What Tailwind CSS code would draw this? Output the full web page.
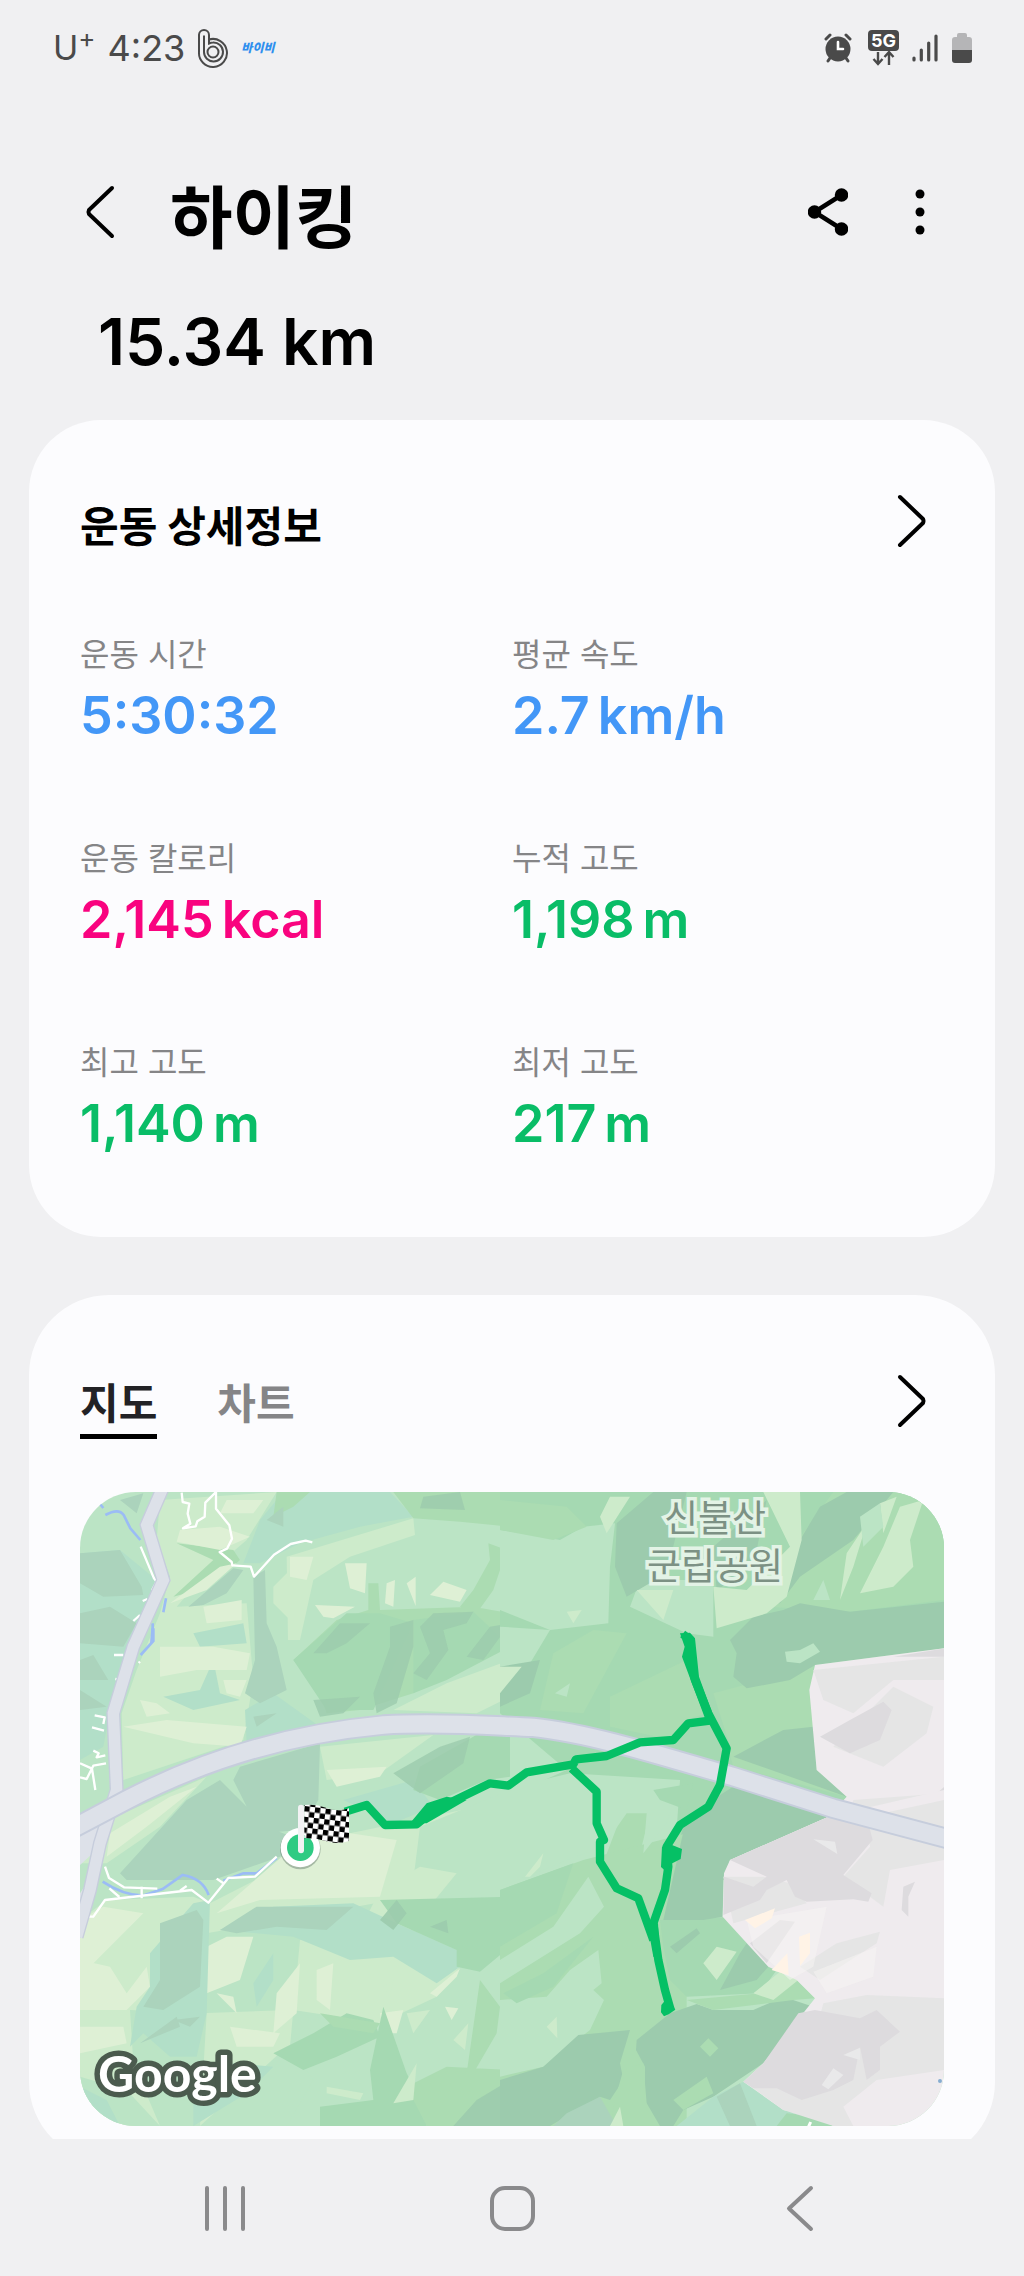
<!DOCTYPE html>
<html lang="ko">
<head>
<meta charset="utf-8">
<meta name="viewport" content="width=device-width, initial-scale=1">
<title>하이킹</title>
<script src="https://cdn.jsdelivr.net/npm/@tailwindcss/browser@4"></script>
</head>
<body class="flex h-screen flex-col overflow-hidden bg-[#f0f0f2] font-['Inter','Noto_Sans_CJK_KR',sans-serif] text-black">

<div class="flex h-[96px] shrink-0 items-center justify-between pr-[52px] pl-[53px] text-[#4a4a4a]">
  <div class="flex items-center">
    <span class="text-[34px] leading-none">U<sup class="text-[26px]">+</sup></span>
    <span class="ml-3 text-[36px] leading-none">4:23</span>
    <svg class="ml-3 h-10 w-8" viewBox="0 0 32 40" fill="none" stroke="currentColor" stroke-width="2" aria-hidden="true">
      <path d="M2 24V7a5 5 0 0 1 10 0v4.500A14 14 0 1 1 2 24Z"/>
      <path d="M7 24V7.500M7 24a9.500 9.500 0 1 0 9-9.500c-2 0-4 1-4 1V7"/>
      <circle cx="16" cy="24" r="5.500"/>
    </svg>
    <span class="ml-3 text-[12px] leading-none font-black text-[#2f8fee] italic">바이비</span>
  </div>
  <div class="flex items-center">
    <svg class="h-9 w-7" viewBox="0 0 28 36" aria-hidden="true">
      <g stroke="#4a4a4a" stroke-width="3" stroke-linecap="round"><path d="M2 9l4-4M26 9l-4-4M6 28l-2 3M22 28l2 3"/></g>
      <circle cx="14" cy="19" r="12.500" fill="#4a4a4a"/>
      <path d="M14 12v7h5" fill="none" stroke="#fff" stroke-width="2.600" stroke-linecap="round"/>
    </svg>
    <svg class="ml-4 h-9 w-8" viewBox="0 0 32 36" aria-hidden="true">
      <rect x="0" y="0" width="31" height="21" rx="4" fill="#4a4a4a"/>
      <text x="15.500" y="17" text-anchor="middle" font-size="18" font-weight="700" fill="#fff">5G</text>
      <path d="M10 22v11M5.500 29l4.500 5 4.500-5M21 35V23M16.500 27l4.500-5 4.500 5" fill="none" stroke="#4a4a4a" stroke-width="2.400"/>
    </svg>
    <svg class="ml-3 h-7 w-7" viewBox="0 0 28 28" stroke="#4a4a4a" stroke-width="3.200" stroke-linecap="round" aria-hidden="true">
      <path d="M2 24v2M9.300 16v10M16.700 9v17M24 2v24"/>
    </svg>
    <svg class="ml-3 h-[30px] w-5" viewBox="0 0 20 30" aria-hidden="true">
      <path d="M0 17V7q0-3 3-3h2V2q0-2 2-2h6q2 0 2 2v2h2q3 0 3 3v10Z" fill="#b5b5b7"/>
      <path d="M0 17h20v10q0 3-3 3H3q-3 0-3-3Z" fill="#4a4a4a"/>
    </svg>
  </div>
</div>

<header class="mt-[66px] flex h-[100px] shrink-0 items-center pr-[88px] pl-[84px]">
  <button class="flex h-16 w-8 items-center" aria-label="뒤로">
    <svg class="h-14 w-8" viewBox="0 0 32 56" fill="none" stroke="#000" stroke-width="4" stroke-linecap="round" stroke-linejoin="round"><path d="M28 4L5 26q-1 2 0 4L28 52"/></svg>
  </button>
  <h1 class="ml-[54px] flex-1 pt-3 text-[68px] leading-[88px] font-bold">하이킹</h1>
  <button aria-label="공유">
    <svg class="h-12 w-10" viewBox="0 0 40 48" stroke="#000" stroke-width="4.500"><path d="M33.500 7L6.500 24l27 17" fill="none"/><circle cx="33.500" cy="7" r="4.500"/><circle cx="6.500" cy="24" r="4.500"/><circle cx="33.500" cy="41" r="4.500"/></svg>
  </button>
  <button class="ml-14" aria-label="더보기">
    <svg class="h-12 w-8" viewBox="0 0 32 48"><circle cx="16" cy="6" r="4.500"/><circle cx="16" cy="24" r="4.500"/><circle cx="16" cy="42" r="4.500"/></svg>
  </button>
</header>

<p class="mt-10 mb-[38px] shrink-0 px-[98px] text-[64px] leading-[80px] font-semibold">15.34 km</p>

<main class="min-h-0 flex-1 overflow-y-auto px-[29px] [scrollbar-width:none]">
  <section class="rounded-[72px] bg-[#fcfcfe] px-[51px] pt-[73px] pb-[77px]">
    <div class="flex items-start justify-between pr-4">
      <h2 class="pt-1 text-[42px] leading-[60px] font-bold">운동 상세정보</h2>
      <button aria-label="운동 상세정보 보기">
        <svg class="h-14 w-8" viewBox="0 0 32 56" fill="none" stroke="#000" stroke-width="4" stroke-linecap="round" stroke-linejoin="round"><path d="M4 4l23 22q1 2 0 4L4 52"/></svg>
      </button>
    </div>
    <dl class="mt-[74px] grid grid-cols-2 gap-y-[83px]">
      <div><dt class="text-[32px] leading-[48px] text-[#858587]">운동 시간</dt><dd class="pt-px text-[52px] leading-[72px] font-semibold text-[#4397f7]">5:30:32</dd></div>
      <div><dt class="text-[32px] leading-[48px] text-[#858587]">평균 속도</dt><dd class="flex gap-2 pt-px text-[52px] leading-[72px] font-semibold text-[#4397f7]"><span>2.7</span><span>km/h</span></dd></div>
      <div><dt class="text-[32px] leading-[48px] text-[#858587]">운동 칼로리</dt><dd class="flex gap-2 pt-px text-[52px] leading-[72px] font-semibold text-[#f9037f]"><span>2,145</span><span>kcal</span></dd></div>
      <div><dt class="text-[32px] leading-[48px] text-[#858587]">누적 고도</dt><dd class="flex gap-2 pt-px text-[52px] leading-[72px] font-semibold text-[#09bd67]"><span>1,198</span><span>m</span></dd></div>
      <div><dt class="text-[32px] leading-[48px] text-[#858587]">최고 고도</dt><dd class="flex gap-2 pt-px text-[52px] leading-[72px] font-semibold text-[#09bd67]"><span>1,140</span><span>m</span></dd></div>
      <div><dt class="text-[32px] leading-[48px] text-[#858587]">최저 고도</dt><dd class="flex gap-2 pt-px text-[52px] leading-[72px] font-semibold text-[#09bd67]"><span>217</span><span>m</span></dd></div>
    </dl>
  </section>

  <section class="mt-[58px] rounded-[80px] bg-[#fcfcfe] px-[51px] pt-[78px] pb-9">
    <div class="flex items-start justify-between pr-4">
      <div class="flex gap-[60px]" role="tablist">
        <button role="tab" aria-selected="true" class="border-b-[5px] border-black text-[42px] leading-[61px] font-bold text-[#222225]">지도</button>
        <button role="tab" aria-selected="false" class="border-b-[5px] border-transparent text-[42px] leading-[61px] font-bold text-[#858587]">차트</button>
      </div>
      <button aria-label="지도 보기">
        <svg class="h-14 w-8" viewBox="0 0 32 56" fill="none" stroke="#000" stroke-width="4" stroke-linecap="round" stroke-linejoin="round"><path d="M4 4l23 22q1 2 0 4L4 52"/></svg>
      </button>
    </div>

    <svg class="mt-[53px] block w-full rounded-[56px]" viewBox="0 0 864 634" role="img" aria-label="하이킹 경로 지도">
      <defs>
        <pattern id="check" width="32" height="32" patternUnits="userSpaceOnUse" patternTransform="translate(734 978) rotate(7)">
          <rect width="32" height="32" fill="#fff"/><path d="M0 0h16v16H0zM16 16h16v16H16z"/>
        </pattern>
      </defs>
      <rect width="864" height="634" fill="#bbe4c5"/>

      <!-- terrain, north-west -->
      <g transform="translate(-20 -12) scale(.33333)">
        <path fill="#cdebcb" d="M300 60L650 36 560 180 420 300 350 380 560 370 580 600 550 780 190 900 185 700 230 570 300 400 330 290 290 180ZM680 230L1060 115 1065 165 870 230 760 300 720 480 684 480ZM60 1075L190 1000 440 890 300 1040 140 1150 60 1150ZM640 320L690 270 690 420 640 370ZM1350 540L1160 610 1000 690 1250 700 1350 650ZM780 800L1120 765 960 880 800 900ZM870 1060L1350 960V1200H780Z"/>
        <path fill="#b2dfc8" d="M650 60L720 36H990L1060 110 900 140 720 190 600 250 550 250 600 120ZM60 220L180 210 290 300 230 430 160 640 130 800 60 840ZM400 460L550 430 560 490 420 500ZM310 650L420 630 460 540 480 640 540 660 400 690ZM640 640L780 740 560 790 555 690ZM850 960L1060 900 1120 980 1000 1030Z"/>
        <path fill="#abdcb2" d="M1000 36H1350V140L1200 125 1060 115ZM650 36H750L700 80 640 110ZM1285 190L1340 210 1300 330 1250 400 1200 380 1240 330 1290 240ZM925 310L955 310 960 390 1240 380 1350 400V460L1200 560 1060 640 900 690 800 700 780 640 700 540 830 420 925 390ZM350 190L520 210 540 240 450 320 340 350 460 240Z"/>
        <path fill="#a5d9b2" d="M700 540L860 400 960 400 1060 430 1000 560 940 690 800 690ZM1060 420L1240 395 1350 500 1160 600 1060 640ZM1080 860L1240 770 1350 700V890L1280 900 1140 960 1060 930Z"/>
        <path fill="#def0d5" d="M500 60L610 60 580 100 480 100ZM360 150L480 140 570 170 480 210 350 185ZM330 370L480 260 530 250 440 330ZM430 380L545 360 545 420 440 430ZM300 500L460 500 570 520 560 570 410 570 300 590ZM190 740L320 720 560 740 540 800 400 790ZM330 950L410 920 260 1040 140 1130 150 1060ZM855 250L920 250 915 340 870 325ZM690 230L760 230 740 300 690 290ZM1110 345L1150 305 1220 330 1200 365ZM980 310L1005 300 1000 380 975 370ZM1040 310L1067 290V378ZM765 375L885 380 820 415 790 410ZM490 600L560 600 540 650 500 640ZM240 660L290 670 330 700 260 710ZM800 870L980 860 960 890 830 920Z"/>
        <path fill="#abd3bc" d="M60 220L180 210 245 320 250 345 130 350 60 310ZM60 400L150 380 230 430 190 500 60 490ZM60 540L100 525 145 600 60 600ZM60 630L140 680 60 690ZM180 60L250 40 230 100ZM385 380L520 265 550 270 500 340 430 375ZM580 290L615 270 620 430 650 500 680 630 600 670 555 640 585 540ZM540 860L780 790 775 960 720 1050 600 1060 520 900ZM180 1180L380 960 480 900 620 1040 720 1080 660 1130 460 1200H200ZM620 120L670 80 670 140ZM580 710L650 700 590 740Z"/>
        <path fill="#9ccbad" opacity=".8" d="M760 520L840 430 930 430 860 490 800 520ZM990 440L1060 420 1060 500 1010 670 950 700 940 640 990 500ZM1080 440L1120 400 1240 395 1220 430 1150 450 1165 510 1100 600 1060 580 1110 520ZM760 660L900 650 850 700 780 710ZM1000 880L1140 800 1230 770 1210 850 1080 940ZM1090 50L1200 36 1215 90 1080 85ZM1220 530L1290 440 1350 430 1270 540Z"/>
      </g>

      <!-- terrain, north-east -->
      <g transform="translate(420 -12) scale(.33333)">
        <path fill="#a5d9b2" d="M0 36H1333V1200H0V960L200 870 0 700Z"/>
        <path fill="#bbe4c5" d="M0 150L70 160 180 180 250 140 345 130 330 260 325 430 150 450 0 390ZM0 440L150 450 60 600 0 640ZM390 380L420 300 640 300 640 470 560 460ZM0 930L210 880 540 900 520 1200H0Z"/>
        <path fill="#abdcb2" d="M0 60L200 80 260 140 160 180 0 150ZM160 520L280 450 380 460 250 700 120 690ZM330 650L560 540 620 700 560 720 520 780 330 740ZM640 640L940 560 940 760 700 830ZM800 380L880 200 1000 36H1333V360L1050 395ZM680 790L930 840 1040 950 700 860ZM370 990L450 1000 420 1120 500 1200H290Z"/>
        <path fill="#9ccbad" d="M350 130L460 36H560L500 280 380 350 345 260ZM640 200L800 60 760 260 650 330ZM870 230L960 80 1040 36H1180L1060 180 900 290 840 370 800 370ZM690 480L760 410 850 390 900 370 1050 395 1333 365V505L945 555 870 600 740 625 700 590 710 520ZM560 1010L700 920 985 1010 690 1140 680 1200H500ZM700 830L850 750 940 740 950 870 1040 950ZM0 560L120 540 90 640 0 680Z"/>
        <path fill="#cdebcb" d="M300 110L330 50 390 50 320 160ZM640 320L740 330 870 200 790 36H900L905 180 860 350 800 400 650 445ZM410 330L520 330 490 420ZM1080 340L1150 200 1200 80 1270 60 1230 180 1240 260 1180 320ZM1020 360L1040 220 1100 130 1060 260ZM200 395L245 390 220 430ZM0 560L65 560 0 640ZM1140 70L1190 50 1150 160Z"/>
        <path fill="#bbe4c5" d="M1080 110L1140 70 1150 140 1090 200ZM940 360L970 300 990 360ZM165 640L210 610 200 650ZM855 515L900 510 940 490 960 515 900 550 860 545Z"/>
        <path fill="#efebee" d="M945 555L1333 505V1200H675L690 1140 985 1010 1040 950 950 870 928 630Z"/>
        <path fill="#e5e5e5" d="M940 570L1333 530V600H1180L1060 700 970 660ZM1180 620L1300 680 1280 760 1150 860 1000 800ZM1060 960L1333 940V1200H1000Z"/>
        <path fill="#dddbde" d="M960 770L1050 720 1150 665 1175 690 1140 780 1050 820ZM985 1010L1080 1000 1120 1080 1070 1140 1100 1200H675L690 1140ZM1180 530L1333 505V530ZM1265 980L1333 920V980Z"/>
      </g>

      <!-- terrain, south-west -->
      <g transform="translate(-20 288) scale(.33333)">
        <path fill="#cdebcb" d="M60 420L140 360 400 350 450 370 780 200 870 160 1350 90V350L1000 360 440 460 420 700 690 690 1140 700 1000 760 680 800 420 1038H60Z"/>
        <path fill="#bbe4c5" d="M1080 140L1350 30V260L1180 290 1060 300ZM960 330L1350 230V1038H680L760 900 690 800 700 690 940 700 1130 610ZM210 690L440 700 420 1038H300L220 850ZM60 890L200 930 300 1038H60Z"/>
        <path fill="#cdebcb" d="M960 330L1080 260 1190 280 1010 500 1200 560 1130 650 960 730 700 690 720 480 900 450Z"/>
        <path fill="#def0d5" d="M60 420L130 380 250 400 90 560 60 560ZM60 540L150 560 200 640 260 560 270 620 200 690 60 690ZM470 400L700 200 870 160 1010 180 960 350 600 360ZM60 740L190 740 200 790 60 820ZM440 500L500 470 580 470 540 600 440 640ZM650 640L720 550 710 700 640 760ZM510 740L660 760 640 800 530 800ZM770 570L820 550 810 690 770 660ZM1110 640L1200 565 1190 590 1130 650ZM1155 680L1195 685 1175 720ZM470 640L520 650 530 700ZM960 700L1030 690 1010 760 970 760Z"/>
        <path fill="#b2dfc8" d="M270 520L400 370 450 360 440 700 410 830 330 830 250 760 210 800 230 680 270 620ZM480 450L640 380 880 370 1010 430 1190 510 1200 560 1130 610 1000 530 870 540 700 470ZM580 610L640 520 640 600 590 680ZM60 920L140 960 180 1038H110ZM400 960L520 850 640 860 560 940 400 1038Z"/>
        <path fill="#abd3bc" d="M480 450L590 380 880 380 800 450 650 440 530 460ZM300 430L410 390 430 420 420 620 310 690 250 680 300 600ZM340 720L420 710 390 740ZM240 790L350 710 360 740Z"/>
        <path fill="#a5d9b2" d="M960 360L1350 350V500L1260 575 1190 560 1190 510 1010 430ZM640 820L760 760 860 700 940 720 960 770 830 830 730 870ZM930 870L970 680 1040 880 1100 1000V1038H780V980L940 960Z"/>
        <path fill="#abdcb2" d="M1260 600L1320 680 1310 760 1240 880 1220 880ZM780 700L960 730 940 760 820 740ZM1040 920L1160 860 1350 870V1038H1100Z"/>
        <path fill="#9ccbad" opacity=".9" d="M960 420L1010 360 1040 400 1000 450ZM1110 440L1160 420 1165 460ZM1250 960L1350 900V1038H1180Z"/>
        <path fill="#cdebcb" d="M1040 700L1110 690 1060 760ZM1180 780L1225 730 1215 810ZM970 620L1000 600 990 650ZM1000 970L1070 850 1060 960ZM800 920L910 940 900 960 800 940Z"/>
      </g>

      <!-- terrain, south-east -->
      <g transform="translate(420 288) scale(.33333)">
        <path fill="#abdcb2" d="M0 330L250 240 560 160V1038H0Z"/>
        <path fill="#bbe4c5" d="M0 0H540L500 130 430 220 440 100 380 100 310 200 200 240 130 270 0 320ZM0 540L160 440 265 290 312 380 240 460 0 610ZM0 660L140 650 210 570 295 510 305 610 280 630 312 660 270 750 130 860 0 890Z"/>
        <path fill="#a5d9b2" d="M0 330L220 250 170 400 0 500ZM10 640L130 580 280 470 160 620 50 670ZM480 420L700 410 830 570 780 640 560 650 510 600 490 500ZM460 30L580 10 560 90 480 60Z"/>
        <path fill="#9ccbad" d="M560 110L700 20 985 110 690 240 670 300 668 410 610 420 490 420 540 200ZM0 900L130 860 235 765 390 750 360 850 370 900 330 960 300 950 150 1038H0ZM410 780L510 700 590 672 640 690 760 690 850 650 940 680 790 850 640 950 550 990 520 1038H470L435 960V860L408 810ZM660 630L720 520 740 490 805 560 770 600ZM510 500L590 445 600 460 530 520Z"/>
        <path fill="#abdcb2" d="M370 870L430 850 440 970 480 1038H330L350 940ZM560 660L780 640 890 600 945 655 880 660 640 690ZM520 960L620 890 640 940 550 990ZM600 800L625 775 655 805 630 830Z"/>
        <path fill="#b2dfc8" d="M730 905L850 990 1000 1038H530L640 950Z"/>
        <path fill="#abd3bc" d="M650 950L720 910 770 1038H690ZM200 1000L300 950 350 1038H160Z"/>
        <path fill="#a5d9b2" d="M830 1038L860 1000 960 1010 1000 1038Z"/>
        <path fill="#cdebcb" d="M75 290L130 220 120 260 90 290ZM760 640L840 575 895 600 820 660ZM330 1038L360 980 370 1038ZM140 740L170 710 172 775ZM610 550L650 500 710 515 650 600Z"/>
        <path fill="#efebee" d="M690 240L985 110 1333 30V1038H1000L960 1010 850 990 730 905 790 850 945 655 890 600 805 560 668 410 672 280Z"/>
        <path fill="#e5e5e5" d="M1100 110L1333 60V240L1170 270 1150 380 1030 290 1110 200ZM670 290L790 290 870 310 920 370 700 430ZM970 670L1100 645 1333 655V870L1130 900 1030 980 1060 1038H1000L850 990 740 910 900 930ZM900 560L1010 490 1140 455 1130 490 960 600Z"/>
        <path fill="#dddbde" d="M690 240L985 110 1100 110 1118 180 1030 285 1115 340 1105 365 1060 358 920 365 885 350 860 300 800 330 780 360 670 405 672 290 760 320 800 290ZM750 490L840 420 885 425 800 550ZM895 700L945 690 1080 715 1130 690 1200 755 1140 800V870L1100 900 1080 800 1060 900 1000 930 905 960 830 925H760L730 905 790 850ZM1210 320L1245 305 1225 350 1225 410 1205 390Z"/>
        <path fill="#f8f5f4" d="M940 575L1130 500 1120 590 980 640ZM740 420L980 380 940 560 870 600 760 500Z" opacity=".5"/>
        <path fill="#e9e9ea" d="M940 178L1005 185 1012 222ZM965 915L1000 865 1030 885 985 928ZM1030 825L1080 803V840Z"/>
        <path fill="#fff3e6" d="M735 420L825 385 815 415 765 445ZM897 470L930 458V520L900 558ZM815 570L862 520 866 586Z"/>
      </g>

      <!-- rivers, roads and the recorded track -->
      <g transform="translate(-20 -12) scale(.33333)" fill="none">
        <path d="M120 72l10 12M136 105q40-22 55 0l20 40 30 35M318 355l-8 42M278 430v55l-36 40M128 1205q60 40 120 42l60-20 60-42q60 10 78 60M490 1202l60-22h40l60-46" stroke="#9bbcf5" stroke-width="8"/>
        <path d="M274 445h10v40l-14 5Z" fill="#9bbcf5"/>
        <g stroke="#fff" stroke-width="7" stroke-linejoin="round">
          <path d="M365 38l3 28 20 5-5 30 8 30-22 14 38-6 5-15 22-14 2-42 30-30M468 36v50l40 50 8 40-15 30-22 10 36 30 2 10 55 4 10 30 60-66 50-32 45-10 20 5"/>
          <path d="M242 200l40 95 8 10-14 26M262 357l-14 6M258 378l-2 12M240 405l-20 18M162 525h28M166 597l14 2M240 545l-4 4M104 706l30 6-4 20M96 742l36 10M100 812l16 8-6 12 26-6M60 850l36 16 10 64M60 892l20 5 20-40 38-7"/>
          <path d="M75 1310h25l35-50 260-30 50 38 60-74 80-4 65-60M135 1160l12 34 45 28 100 4M148 1225l30 26M245 1220v35M380 1218l-20 14M470 1196l20 14"/>
        </g>
        <path d="M60 1155V1350L120 1100ZM60 1050l90-30-30 130-60 90Z" fill="#dde1e9"/>
        <path d="M310 20L260 135 310 300 220 500 160 700 170 930 120 1090 90 1230 50 1370" stroke="#c6cddc" stroke-width="42"/>
        <path d="M310 20L260 135 310 300 220 500 160 700 170 930 120 1090 90 1230 50 1370" stroke="#dde1e9" stroke-width="34"/>
        <path d="M40 1045L200 960C450 830 700 760 970 735 1150 725 1300 738 1420 742 1600 760 1860 845 2020 890L2320 985 2670 1078" stroke="#c6cddc" stroke-width="64"/>
        <path d="M40 1045L200 960C450 830 700 760 970 735 1150 725 1300 738 1420 742 1600 760 1860 845 2020 890L2320 985 2670 1078" stroke="#dde1e9" stroke-width="52"/>
        <path d="M2244 1944l8-18" stroke="#fff" stroke-width="9"/>
        <circle cx="2640" cy="1803" r="6" fill="#86add0"/>
        <g stroke="#05c065" stroke-width="25" stroke-linejoin="round">
          <path d="M855 995L920 975 975 1035 1070 1033 1120 992 1290 910 1345 917 1400 877 1540 853 1548 838 1640 828 1740 787 1840 780 1885 730 1950 722"/>
          <path d="M1868 462L1892 480 1888 530 1905 600 1945 700 2000 805 1980 915 1945 980 1860 1035 1820 1100 1825 1160 1815 1230 1780 1330 1795 1440 1815 1530 1832 1590"/>
          <path d="M1535 865L1610 935 1610 1030 1632 1080 1620 1085 1620 1145 1670 1225 1735 1255 1780 1380"/>
        </g>
        <path fill="#05c065" d="M1860 460l30-2 15 17 12 115 40 110-20 20-71-190 8-30ZM1806 1100l30-5 30 12-4 30-28 14-14 25-17-15ZM1804 1575l20-24 22 38-20 14-14 6-9-12ZM1050 1030l50-60 60-20 60 10-120 70ZM1762 1330h32l6 110-20-10Z"/>
      </g>

      <!-- finish marker -->
      <g transform="translate(-20 -12) scale(.33333)">
        <circle cx="721" cy="1107" r="61" fill="#5f7568" opacity=".45"/>
        <circle cx="721" cy="1103" r="59" fill="#fff"/>
        <circle cx="721" cy="1103" r="40" fill="#2fcb83"/>
        <path d="M733 975q34-4 67 9t67 1v98q-34 12-67 1t-67-9Z" fill="url(#check)"/>
        <path d="M723 983v128" stroke="#f2f2f4" stroke-width="18" stroke-linecap="round"/>
      </g>

      <text font-family="Noto Sans CJK KR, sans-serif" font-size="37" text-anchor="middle" fill="#7c9184" stroke="#e3f3e6" stroke-width="7" paint-order="stroke"><tspan x="635" y="40">신불산</tspan><tspan x="635" y="88">군립공원</tspan></text>
      <text x="18" y="600" font-family="Lato, sans-serif" font-size="50" font-weight="700" fill="#fff" stroke="#4b5b4e" stroke-width="11" stroke-linejoin="round" paint-order="stroke">Google</text>
    </svg>
  </section>
</main>

<nav class="grid h-[137px] shrink-0 grid-cols-3 place-items-center px-[82px]">
  <button aria-label="최근 앱"><svg class="h-12 w-12" viewBox="0 0 48 48" stroke="#8a8a8c" stroke-width="4" stroke-linecap="round"><path d="M6 4v41M24 4v41M42 4v41"/></svg></button>
  <button aria-label="홈"><svg class="h-12 w-12" viewBox="0 0 48 48" fill="none" stroke="#8a8a8c" stroke-width="4"><rect x="4" y="4" width="41" height="41" rx="13"/></svg></button>
  <button aria-label="이전"><svg class="h-12 w-12" viewBox="0 0 48 48" fill="none" stroke="#8a8a8c" stroke-width="4" stroke-linecap="round" stroke-linejoin="round"><path d="M36 4L14 24.500 36 45"/></svg></button>
</nav>
</body>
</html>
